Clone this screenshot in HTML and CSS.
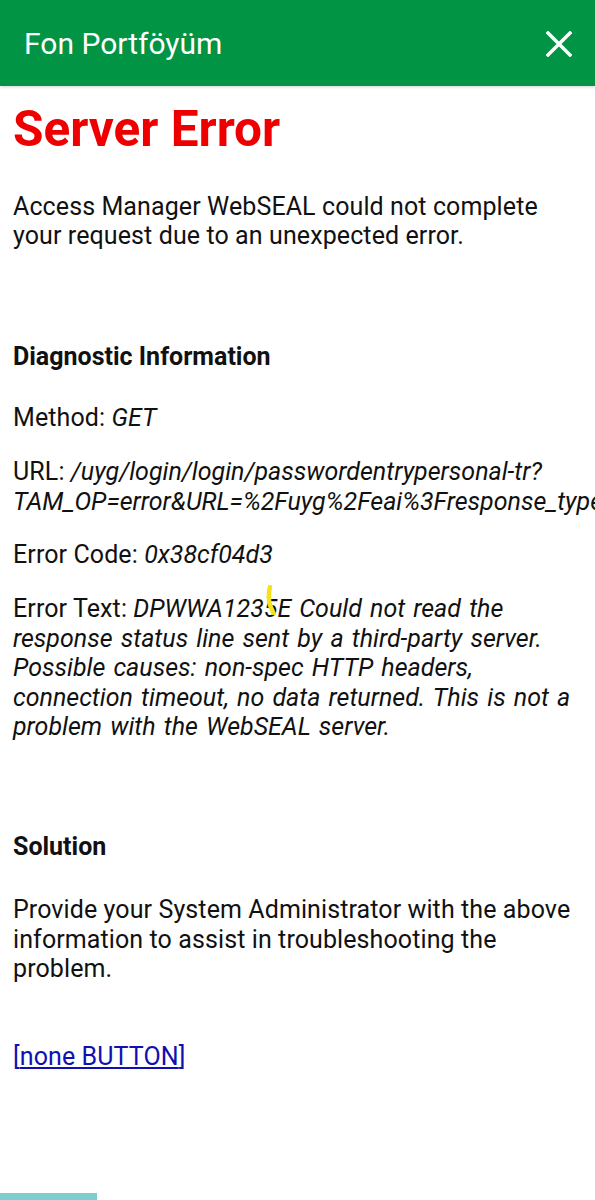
FILE: index.html
```html
<!DOCTYPE html>
<html lang="en">
<head>
<meta charset="utf-8">
<title>Fon Portföyüm</title>
<link rel="stylesheet" href="styles.css">
</head>
<body>
<header class="appbar">
  <span class="appbar-title">Fon Portföyüm</span>
  <svg class="close-icon" viewBox="0 0 26 26" width="26" height="26" aria-label="Close">
    <path d="M2 2 L24 24 M24 2 L2 24" stroke="#ffffff" stroke-width="3.4" stroke-linecap="square" fill="none"/>
  </svg>
</header>
<main class="content">
  <h1 class="title">Server Error</h1>
  <p class="text intro">Access Manager WebSEAL could not complete your request due to an unexpected error.</p>
  <h3 class="heading diag">Diagnostic Information</h3>
  <p class="text first">Method: <em>GET</em></p>
  <p class="text nowrap-line">URL: <em>/uyg/login/login/passwordentrypersonal-tr?<br>TAM_OP=error&amp;URL=%2Fuyg%2Feai%3Fresponse_type=code</em></p>
  <p class="text">Error Code: <em>0x38cf04d3</em></p>
  <p class="text errtext">Error Text: <em>DPWWA1235E Could not read the response status line sent by a third-party server. Possible causes: non-spec HTTP headers, connection timeout, no data returned. This is not a problem with the WebSEAL server.</em>
    <svg class="scribble" viewBox="0 0 12 30" width="12" height="30"><path d="M5 2 C3.5 8 3.5 15 5 20 C6 23 7.5 26 8.5 28" stroke="#f2e31c" stroke-width="4.5" fill="none" stroke-linecap="round"/></svg>
  </p>
  <h3 class="heading solution">Solution</h3>
  <p class="text provide">Provide your System Administrator with the above information to assist in troubleshooting the problem.</p>
  <p class="text button-line"><span class="bracket">[</span><a class="link" href="#">none BUTTON</a><span class="bracket">]</span></p>
</main>
<div class="bottom-bar"></div>
</body>
</html>
```
FILE: styles.css
```css
html, body {
  margin: 0;
  padding: 0;
}
body {
  width: 595px;
  height: 1200px;
  overflow: hidden;
  background: #ffffff;
  font-family: Roboto, "Liberation Sans", sans-serif;
  color: #111111;
  position: relative;
}
.appbar {
  height: 86px;
  background: #009444;
  display: flex;
  align-items: center;
  justify-content: space-between;
  padding: 0 23px 0 24px;
  box-shadow: 0 1px 3px rgba(0,0,0,0.18);
  position: relative;
  z-index: 1;
}
.appbar-title {
  color: #ffffff;
  font-size: 30px;
  font-weight: 400;
  margin-top: 1px;
}
.close-icon {
  display: block;
  margin-top: 1px;
}
.content {
  padding: 0 13px;
  overflow: hidden;
}
.title {
  margin: 13px 0 0;
  color: #ee0000;
  font-size: 49.5px;
  font-weight: 700;
  line-height: 60px;
}
.text {
  font-size: 25px;
  line-height: 29.4px;
  letter-spacing: 0.1px;
  margin: 24.5px 0 0;
}
.text em {
  font-style: italic;
  font-size: 25px;
  letter-spacing: 0;
  word-spacing: 2px;
}
.intro {
  margin-top: 33px;
}
.heading {
  font-size: 25px;
  font-weight: 700;
  line-height: 29.4px;
  margin: 0;
}
.diag {
  margin-top: 91px;
}
.solution {
  margin-top: 91px;
}
.first {
  margin-top: 32px;
}
.provide {
  margin-top: 33.5px;
}
.nowrap-line {
  white-space: nowrap;
}
.errtext {
  position: relative;
}
.scribble {
  position: absolute;
  left: 252px;
  top: -9px;
}
.button-line {
  margin-top: 58px;
}
.bracket {
  color: #1010b0;
}
.link {
  color: #1010b0;
  text-decoration: underline;
}
.bottom-bar {
  position: absolute;
  left: 0;
  bottom: 0;
  width: 97px;
  height: 7px;
  background: #7dcfcf;
}
```
